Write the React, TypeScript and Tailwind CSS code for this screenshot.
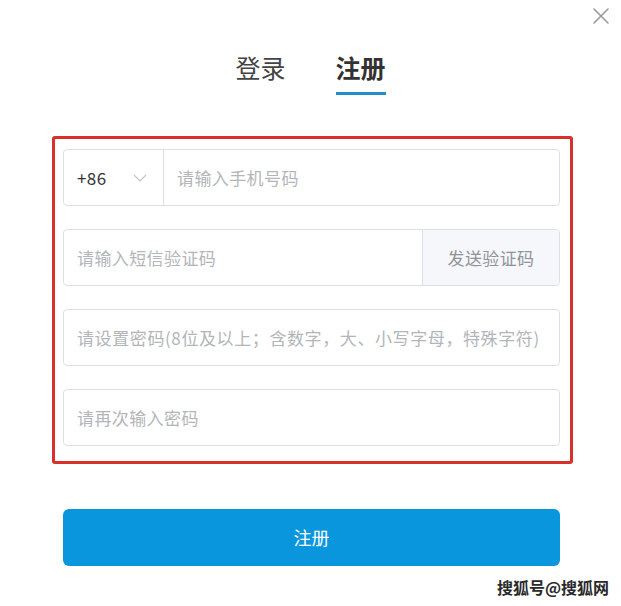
import React from "react";

export default function App() {
  const font = "font-['Noto_Sans_CJK_SC','Noto_Sans',sans-serif]";
  return (
    <div className={`relative w-[621px] h-[606px] bg-white ${font}`}>
      <button className="absolute left-[592px] top-[7px] w-[18px] h-[18px] text-[#9a9a9a]">
        <svg viewBox="0 0 18 18" width="18" height="18" fill="none" stroke="currentColor" strokeWidth="1.6" strokeLinecap="round">
          <path d="M2 2 L16 16 M16 2 L2 16" />
        </svg>
      </button>

      <div className="flex justify-center gap-[50px] pt-[50px]">
        <div className="flex flex-col items-center">
          <span className="text-[25px] leading-[34px] text-[#444]">登录</span>
        </div>
        <div className="flex flex-col items-center">
          <span className="text-[25px] leading-[34px] font-bold text-[#333]">注册</span>
          <div className="mt-[8px] h-[3px] w-[50px] bg-[#2290c6]" />
        </div>
      </div>

      <div className="ml-[52px] mt-[41px] w-[521px] border-[3px] border-[#d8302a] rounded-[3px] pl-[8px] pt-[10px] pb-[15px] flex flex-col gap-[23px]">
        <div className="flex h-[57px] w-[497px] rounded-[4px] border border-[#dcdfe6]">
          <div className="flex w-[100px] items-center justify-between border-r border-[#dcdfe6] pl-[13px] pr-[16px]">
            <span className="text-[17px] text-[#333] tracking-[0.4px]">+86</span>
            <svg viewBox="0 0 14 8" width="14" height="8" fill="none" stroke="#c0c4cc" strokeWidth="1.2">
              <path d="M1 1 L7 7 L13 1" />
            </svg>
          </div>
          <div className="flex items-center pl-[13px] text-[17px] text-[#b2b5ba] tracking-[0.4px]">请输入手机号码</div>
        </div>

        <div className="flex h-[57px] w-[497px] rounded-[4px] border border-[#dcdfe6] overflow-hidden">
          <div className="flex flex-1 items-center pl-[13px] text-[17px] text-[#b2b5ba] tracking-[0.4px]">请输入短信验证码</div>
          <div className="flex w-[137px] items-center justify-center border-l border-[#dcdfe6] bg-[#f5f7fa] text-[17px] text-[#909399] tracking-[0.4px]">发送验证码</div>
        </div>

        <div className="flex h-[57px] w-[497px] items-center rounded-[4px] border border-[#dcdfe6] pl-[13px] text-[17px] text-[#b2b5ba] whitespace-nowrap tracking-[0.6px]">
          请设置密码(8位及以上；含数字，大、小写字母，特殊字符)
        </div>

        <div className="flex h-[57px] w-[497px] items-center rounded-[4px] border border-[#dcdfe6] pl-[13px] text-[17px] text-[#b2b5ba] tracking-[0.4px]">
          请再次输入密码
        </div>
      </div>

      <button className="ml-[63px] mt-[45px] flex h-[57px] w-[497px] items-center justify-center rounded-[6px] bg-[#0a96dd] text-[18px] text-white">
        注册
      </button>

      <div className="absolute left-[497px] top-[575px] text-[16px] font-bold text-[#2a2a2a] [text-shadow:0_0_2px_#fff,0_0_1px_#fff]">
        搜狐号@搜狐网
      </div>
    </div>
  );
}
